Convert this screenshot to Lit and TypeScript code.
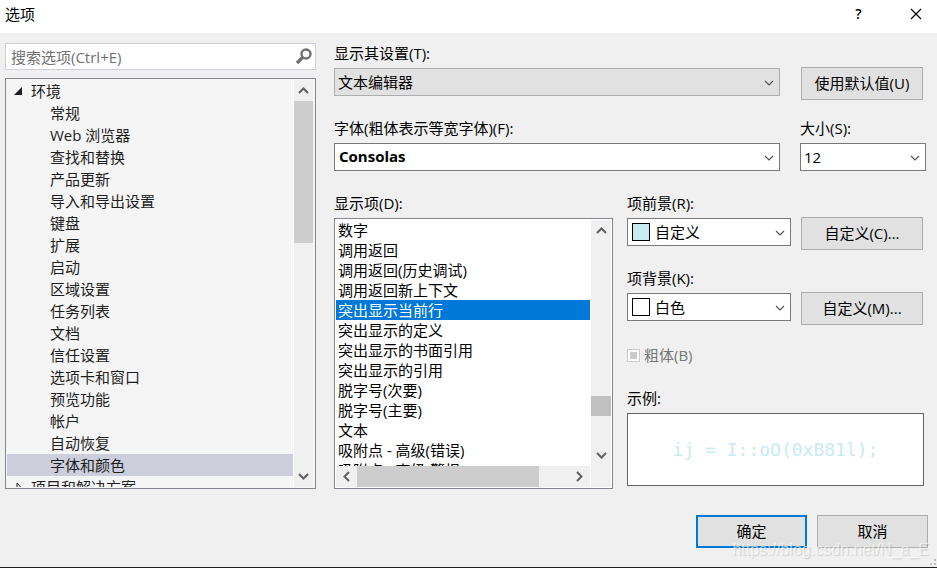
import { LitElement, html, css, svg, nothing } from "lit";
import { customElement, property, state } from "lit/decorators.js";
import { classMap } from "lit/directives/class-map.js";

const base = css`
  *, *::before, *::after { box-sizing: border-box; }
  button, select, input { font: inherit; color: inherit; margin: 0; }
  ul { list-style: none; margin: 0; padding: 0; }
`;

const arrows: Record<string, string> = {
  up: "M1 8 L5.5 3.5 L10 8",
  down: "M1 3 L5.5 7.5 L10 3",
  left: "M8 1 L3.5 5.5 L8 10",
  right: "M3 1 L7.5 5.5 L3 10",
};

@customElement("scroll-bar")
export class ScrollBar extends LitElement {
  @property() direction: "vertical" | "horizontal" = "vertical";
  @property({ type: Number }) start = 0;
  @property({ type: Number }) size = 50;
  @property({ type: Boolean }) active = false;

  static styles = [base, css`
    :host { display: block; min-width: 0; min-height: 0; }
    .bar { display: flex; width: 100%; height: 100%; background: #f0f0f0; }
    .vertical { flex-direction: column; }
    .arrow { flex: none; display: flex; align-items: center; justify-content: center;
      width: 20px; height: 21px; padding: 0; border: 0; background: none; }
    .track { flex: 1; display: flex; min-width: 0; min-height: 0; }
    .vertical .track { flex-direction: column; }
    .thumb { background: #cdcdcd; }
    .active .thumb { background: #c0c0c0; }
    .vertical .arrow { width: 100%; }
    .horizontal .arrow { height: 100%; width: 21px; }
    svg { display: block; width: 11px; height: 11px; fill: none; stroke: #606060; stroke-width: 2; }
  `];

  private arrow(kind: string, label: string) {
    return html`<button class="arrow" aria-label=${label}>
      <svg viewBox="0 0 11 11">${svg`<path d=${arrows[kind]}></path>`}</svg>
    </button>`;
  }

  render() {
    const v = this.direction === "vertical";
    return html`<div class=${classMap({ bar: true, vertical: v, horizontal: !v, active: this.active })}>
      ${this.arrow(v ? "up" : "left", v ? "向上" : "向左")}
      <div class="track">
        <div style="flex: ${this.start} 1 0"></div>
        <div class="thumb" style="flex: ${this.size} 1 0"></div>
        <div style="flex: ${100 - this.start - this.size} 1 0"></div>
      </div>
      ${this.arrow(v ? "down" : "right", v ? "向下" : "向右")}
    </div>`;
  }
}

@customElement("combo-box")
export class ComboBox extends LitElement {
  @property() label = "";
  @property() value = "";
  @property() swatch = "";
  @property() kind = "";

  static styles = [base, css`
    :host { display: block; min-width: 0; }
    label { display: block; height: 20px; line-height: 20px; margin-bottom: 5px; white-space: nowrap; }
    .box { position: relative; }
    select { appearance: none; display: block; width: 100%; height: 28px; padding: 0 24px 0 3px;
      border: 1px solid #7a7a7a; border-radius: 0; background: #fff; color: #000; outline: 0; }
    .grey select { background: #e1e1e1; border-color: #adadad; }
    .bold select { padding-left: 4px; padding-bottom: 2px; font-weight: 700; }
    .swatched select { padding-left: 27px; }
    .swatch { position: absolute; left: 5px; top: 5px; width: 18px; height: 18px;
      border: 1px solid #000; pointer-events: none; }
    svg { position: absolute; right: 6px; top: 10px; width: 10px; height: 10px;
      fill: none; stroke: #505050; stroke-width: 1.1; pointer-events: none; }
  `];

  render() {
    return html`<label for="field">${this.label}</label>
      <div class=${classMap({ box: true, grey: this.kind === "grey", bold: this.kind === "bold", swatched: !!this.swatch })}>
        <select id="field"><option>${this.value}</option></select>
        ${this.swatch ? html`<span class="swatch" style="background: ${this.swatch}"></span>` : nothing}
        <svg viewBox="0 0 10 10"><path d="M1 3 L5 7 L9 3"></path></svg>
      </div>`;
  }
}

const pages = ["常规", "Web 浏览器", "查找和替换", "产品更新", "导入和导出设置", "键盘", "扩展", "启动",
  "区域设置", "任务列表", "文档", "信任设置", "选项卡和窗口", "预览功能", "帐户", "自动恢复", "字体和颜色"];

const displayItems = ["数字", "调用返回", "调用返回(历史调试)", "调用返回新上下文", "突出显示当前行",
  "突出显示的定义", "突出显示的书面引用", "突出显示的引用", "脱字号(次要)", "脱字号(主要)", "文本",
  "吸附点 - 高级(错误)", "吸附点 - 高级(警报)"];

@customElement("app-root")
export class AppRoot extends LitElement {
  @state() private page = "字体和颜色";
  @state() private item = "突出显示当前行";

  static styles = [base, css`
    :host { display: block; position: relative; background: #f0f0f0; color: #000;
      border-bottom: 1px solid #1e1e1e; overflow: hidden;
      font: 15px/20px "Open Sans", "Noto Sans CJK SC", sans-serif; }
    .titlebar { display: flex; align-items: center; gap: 14px; height: 33px; padding: 0 0 6px 5px; background: #fff; }
    h1 { flex: 1; margin: 0; font-size: 15px; font-weight: 400; }
    .caption { display: flex; align-items: center; justify-content: center; width: 43px; height: 26px;
      padding: 0; border: 0; background: none; }
    .caption svg { width: 12px; height: 12px; fill: none; stroke: #000; stroke-width: 1.2; }
    .help { font-size: 14px; font-weight: 600; }
    main { display: grid; grid-template-columns: minmax(0, 311fr) minmax(0, 592fr); gap: 18px;
      padding: 10px 11px 0 5px; }
    .nav { display: flex; flex-direction: column; gap: 8px; }
    .search { display: flex; align-items: center; height: 27px; padding: 0 3px 0 5px;
      border: 1px solid #ccceda; background: #fff; }
    .search input { flex: 1; min-width: 0; padding: 0; border: 0; outline: 0; background: none; }
    .search input::placeholder { color: #717171; opacity: 1; }
    .search svg { flex: none; width: 17px; height: 17px; fill: none; stroke: #717171; }
    .frame { border: 1px solid #828790; padding: 1px; }
    .tree { display: flex; height: 411px; background: #f5f5f5; color: #1e1e1e; }
    .tree > ul { flex: 1; min-width: 0; overflow: hidden; }
    .tree scroll-bar { width: 21px; border-left: 1px solid #fff; padding-right: 1px; }
    .row { height: 22px; line-height: 22px; white-space: nowrap; }
    .child { padding-left: 43px; }
    .group { display: flex; align-items: center; padding-left: 7px; gap: 8px; }
    .group svg { width: 9px; height: 9px; }
    .row.selected { background: #cccedb; }
    .settings { display: flex; flex-direction: column; gap: 22px; }
    .line { display: grid; grid-template-columns: minmax(0, 1fr) 126px; gap: 20px; align-items: end; }
    .push { width: 122px; height: 33px; padding: 0 0 2px; border: 1px solid #adadad; background: #e1e1e1; }
    .line .push { justify-self: end; margin: 0 3px -4px 0; }
    .detail { display: grid; grid-template-columns: minmax(0, 279fr) minmax(0, 299fr); gap: 14px; }
    .caption-text { height: 20px; line-height: 20px; margin-bottom: 5px; }
    .list { display: grid; grid-template-columns: minmax(0, 1fr) 20px; grid-template-rows: 246px 21px;
      column-gap: 1px; height: 271px; background: #fff; }
    .list ul { overflow: hidden; }
    .option { height: 20px; line-height: 20px; padding-left: 2px; white-space: nowrap; }
    .option.selected { background: #0078d7; color: #fff; }
    .corner { background: #f0f0f0; }
    .colors { display: flex; flex-direction: column; }
    .pair { display: flex; align-items: flex-end; gap: 10px; padding-right: 3px; margin-bottom: 22px; }
    .pair combo-box { flex: 1; }
    .pair .push { margin-bottom: -4px; }
    .check { display: flex; align-items: center; gap: 4px; height: 20px; margin: 2px 0 23px; color: #767676; }
    .check input { appearance: none; width: 13px; height: 13px; padding: 2px; border: 1px solid #ccc;
      background: #ccc content-box; box-shadow: inset 0 0 0 2px #fff; }
    .sample { display: flex; align-items: center; justify-content: center; height: 73px;
      margin-right: 2px; border: 1px solid #646464; background: #fff; color: #c8eaf3;
      font: 18px/22px "DejaVu Sans Mono", monospace; white-space: pre; }
    footer { display: flex; justify-content: flex-end; gap: 10px; padding: 26px 9px 19px; }
    footer .push { width: 111px; }
    footer .primary { border: 2px solid #0078d7; }
    .watermark { position: absolute; right: 8px; bottom: 7px; color: rgba(255, 255, 255, 0.6);
      font: 16px/20px "Liberation Sans", sans-serif; text-shadow: 1px 1px 1px rgba(0, 0, 0, 0.14);
      pointer-events: none; }
    .grip { position: absolute; right: 1px; bottom: 2px; width: 6px; height: 6px; fill: #bfbfbf; }
  `];

  render() {
    return html`
      <header class="titlebar">
        <h1>选项</h1>
        <button class="caption help">?</button>
        <button class="caption" aria-label="关闭"><svg viewBox="0 0 12 12"><path d="M1 1 L11 11 M11 1 L1 11"></path></svg></button>
      </header>
      <main>
        <section class="nav">
          <div class="search">
            <input type="text" aria-label="搜索选项" placeholder="搜索选项(Ctrl+E)">
            <svg viewBox="0 0 17 17"><circle cx="11" cy="6" r="4.5" stroke-width="2.4"></circle><path d="M8 9 L2 15" stroke-width="3.2"></path></svg>
          </div>
          <div class="tree frame">
            <ul role="tree">
              <li class="row group" role="treeitem" aria-expanded="true">
                <svg viewBox="0 0 9 9"><path d="M8 0 V8 H0 Z" fill="#1e1e1e"></path></svg>环境</li>
              ${pages.map((p) => html`<li role="treeitem" @click=${() => (this.page = p)}
                class=${classMap({ row: true, child: true, selected: p === this.page })}>${p}</li>`)}
              <li class="row group" role="treeitem" aria-expanded="false">
                <svg viewBox="0 0 9 9"><path d="M3 0 L7 4.5 L3 9 Z" fill="none" stroke="#1e1e1e"></path></svg>项目和解决方案</li>
            </ul>
            <scroll-bar .start=${0} .size=${39}></scroll-bar>
          </div>
        </section>
        <section class="settings">
          <div class="line">
            <combo-box label="显示其设置(T):" value="文本编辑器" kind="grey"></combo-box>
            <button class="push">使用默认值(U)</button>
          </div>
          <div class="line">
            <combo-box label="字体(粗体表示等宽字体)(F):" value="Consolas" kind="bold"></combo-box>
            <combo-box label="大小(S):" value="12"></combo-box>
          </div>
          <div class="detail">
            <div>
              <div class="caption-text" id="items">显示项(D):</div>
              <div class="list frame">
                <ul role="listbox" aria-labelledby="items">
                  ${displayItems.map((d) => html`<li role="option" @click=${() => (this.item = d)}
                    class=${classMap({ option: true, selected: d === this.item })}>${d}</li>`)}
                </ul>
                <scroll-bar active .start=${76} .size=${10}></scroll-bar>
                <scroll-bar direction="horizontal" .start=${0} .size=${86}></scroll-bar>
                <div class="corner"></div>
              </div>
            </div>
            <div class="colors">
              <div class="pair">
                <combo-box label="项前景(R):" value="自定义" swatch="#c8eaf3"></combo-box>
                <button class="push">自定义(C)...</button>
              </div>
              <div class="pair">
                <combo-box label="项背景(K):" value="白色" swatch="#ffffff"></combo-box>
                <button class="push">自定义(M)...</button>
              </div>
              <label class="check"><input type="checkbox" disabled>粗体(B)</label>
              <div class="caption-text">示例:</div>
              <div class="sample">ij = I::oO(0xB81l);</div>
            </div>
          </div>
        </section>
      </main>
      <footer>
        <button class="push primary">确定</button>
        <button class="push">取消</button>
      </footer>
      <div class="watermark">https://blog.csdn.net/N_a_E</div>
      <svg class="grip" viewBox="0 0 6 6"><path d="M4 0h2v2h-2z M0 4h2v2h-2z M4 4h2v2h-2z"></path></svg>
    `;
  }
}
